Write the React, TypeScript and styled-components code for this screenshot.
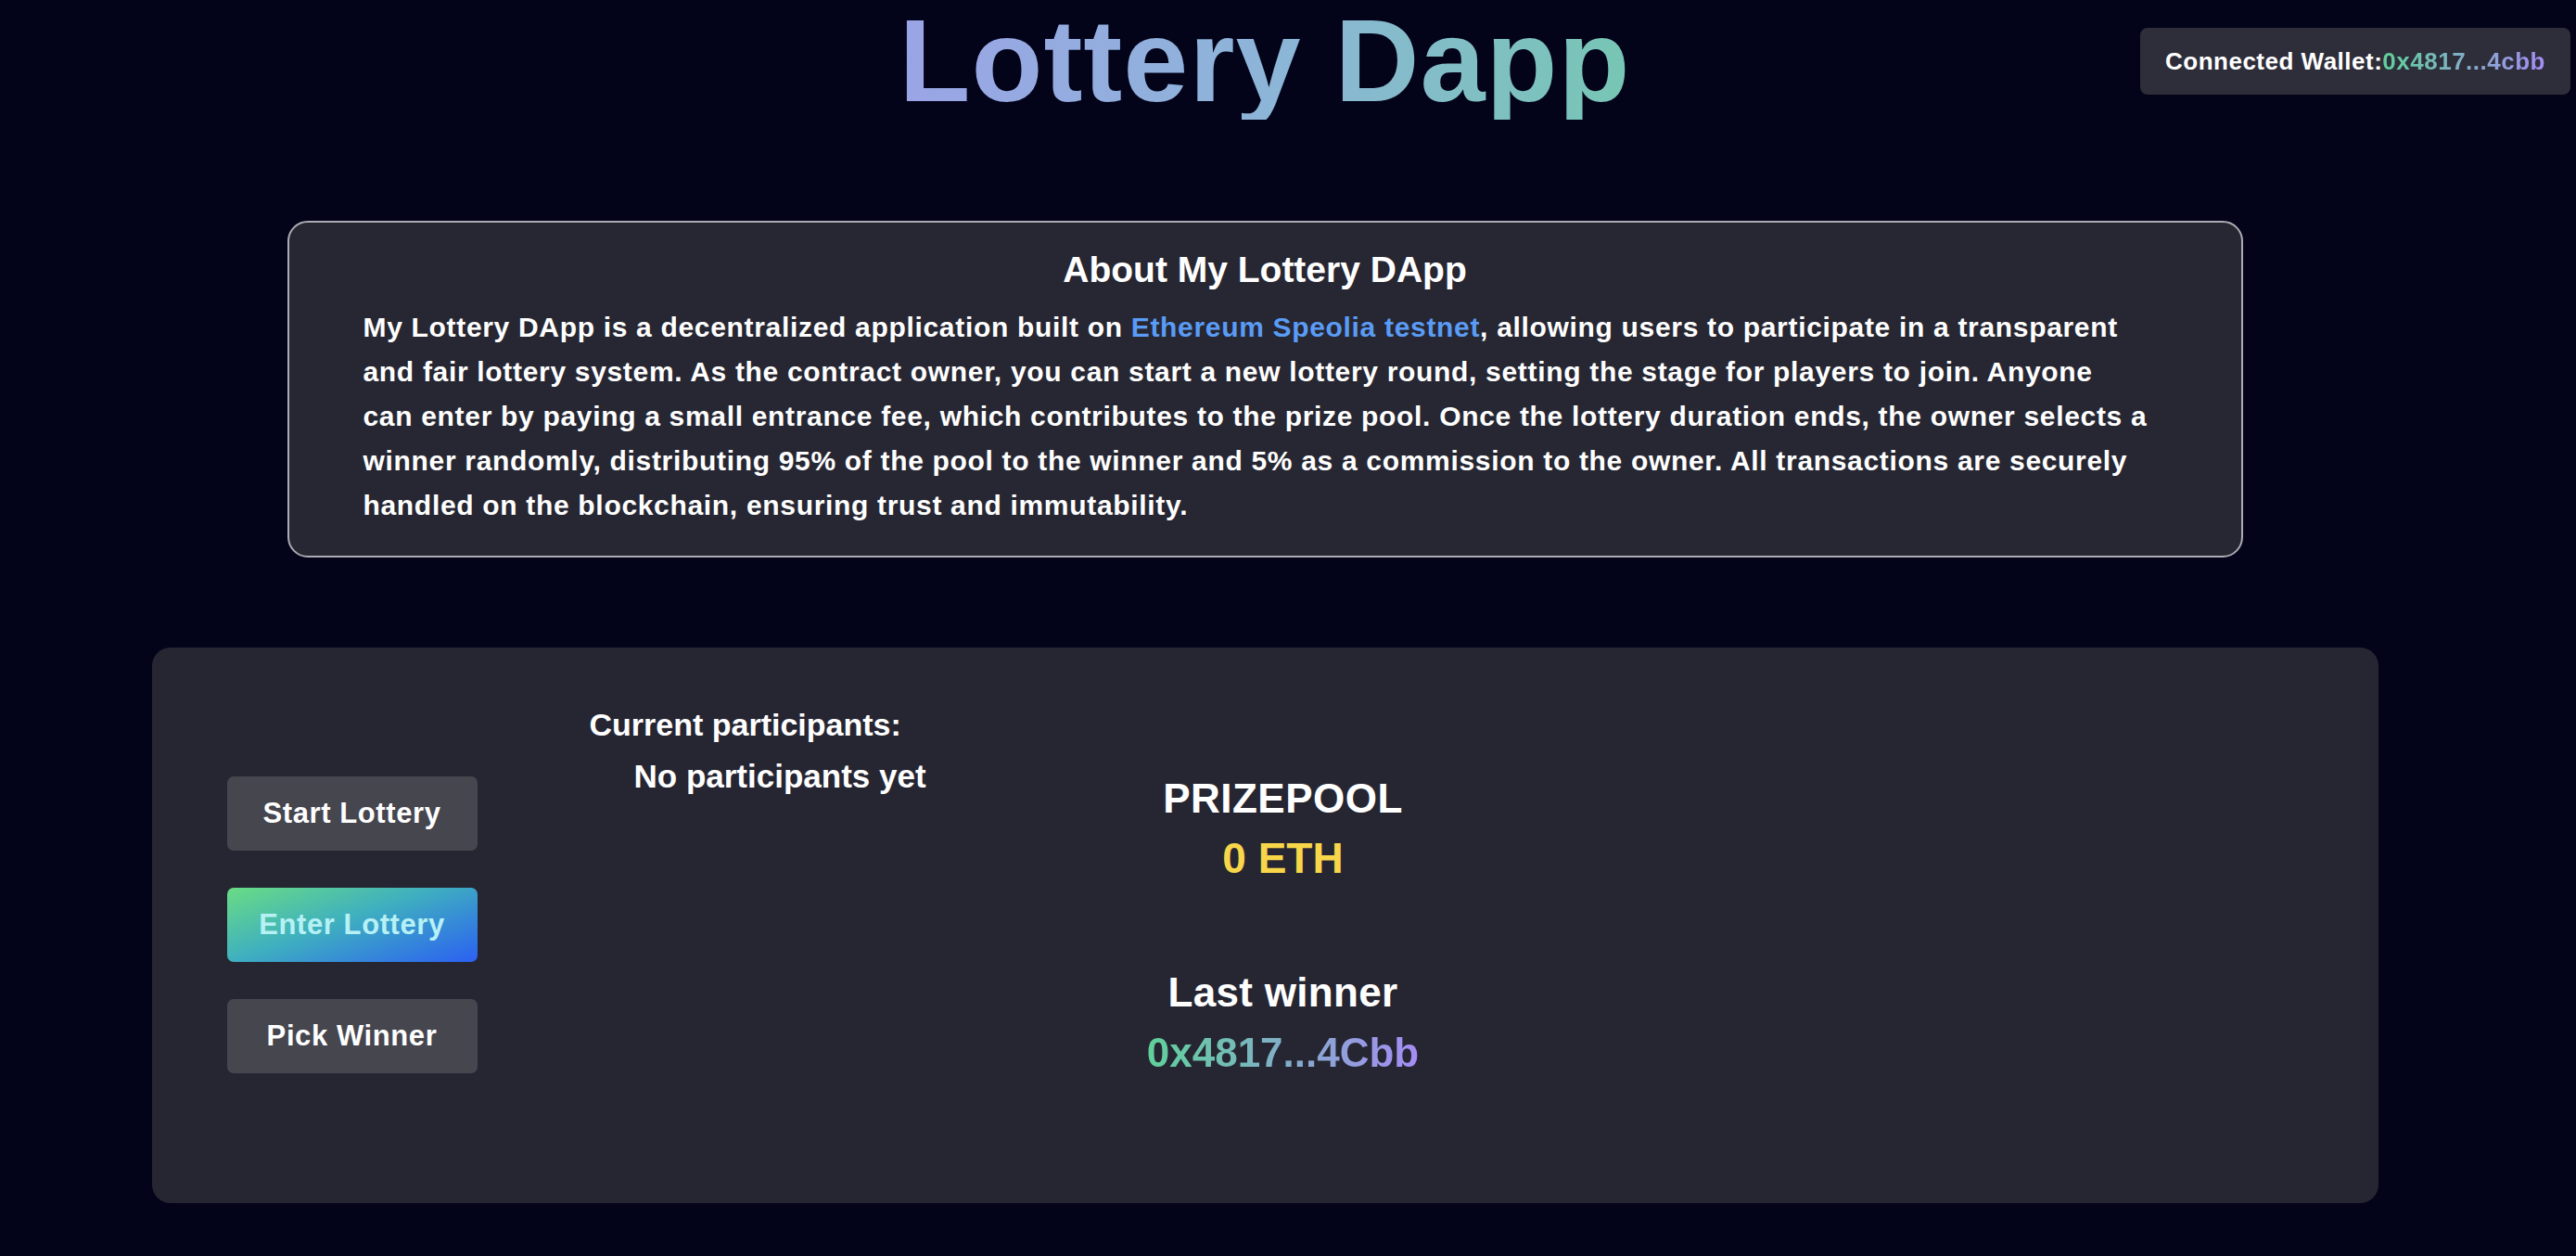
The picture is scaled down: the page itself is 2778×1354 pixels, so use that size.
import React from "react";
import styled, { createGlobalStyle } from "styled-components";

const GlobalStyle = createGlobalStyle`
  html, body {
    margin: 0;
    padding: 0;
    background: #03031a;
    color: #ffffff;
    font-family: "Liberation Sans", Arial, sans-serif;
  }
  * { box-sizing: border-box; }
`;

const Page = styled.div`
  width: 2728px;
  min-height: 1354px;
  display: flex;
  flex-direction: column;
  align-items: center;
  padding-top: 3px;
`;

const Title = styled.h1`
  margin: 0;
  font-size: 126px;
  line-height: 1;
  font-weight: 700;
  letter-spacing: 1px;
  background: linear-gradient(90deg, #9aa4e6 0%, #8db5d8 50%, #77c6b4 100%);
  -webkit-background-clip: text;
  background-clip: text;
  color: transparent;
`;

const WalletBadge = styled.div`
  position: absolute;
  top: 30px;
  right: 6px;
  width: 464px;
  height: 72px;
  display: flex;
  align-items: center;
  justify-content: center;
  background: #2e2e3a;
  border-radius: 8px;
  font-size: 26px;
  font-weight: 700;
  letter-spacing: 0.5px;
  color: #ffffff;
`;

const GradientText = styled.span<{ $from: string; $to: string }>`
  background: linear-gradient(90deg, ${(p) => p.$from}, ${(p) => p.$to});
  -webkit-background-clip: text;
  background-clip: text;
  color: transparent;
`;

const AboutCard = styled.section`
  margin-top: 109px;
  width: 2109px;
  background: #272733;
  border: 2px solid #acacb4;
  border-radius: 22px;
  padding: 28px 80px 30px 80px;
`;

const AboutHeading = styled.h2`
  margin: 0 0 14px 0;
  text-align: center;
  font-size: 39px;
  line-height: 1.2;
  font-weight: 700;
`;

const AboutText = styled.p`
  margin: 0;
  font-size: 30px;
  line-height: 48px;
  font-weight: 700;
  letter-spacing: 0.68px;
  white-space: nowrap;
`;

const Link = styled.span`
  color: #5a9cf5;
`;

const Panel = styled.section`
  margin-top: 97px;
  width: 2401px;
  height: 599px;
  background: #262633;
  border-radius: 20px;
  padding: 55px 81px;
  display: flex;
  align-items: center;
`;

const ButtonColumn = styled.div`
  width: 270px;
  display: flex;
  flex-direction: column;
  gap: 40px;
`;

const ActionButton = styled.button<{ $primary?: boolean }>`
  width: 270px;
  height: 80px;
  border: none;
  border-radius: 7px;
  font-family: "Liberation Sans", Arial, sans-serif;
  font-size: 31px;
  font-weight: 700;
  letter-spacing: 0.6px;
  cursor: pointer;
  color: ${(p) => (p.$primary ? "#b6f1f5" : "#ffffff")};
  background: ${(p) =>
    p.$primary
      ? "linear-gradient(160deg, #69dc84 0%, #3fb0bf 45%, #2b60f2 100%)"
      : "#46464f"};
`;

const Participants = styled.div`
  align-self: flex-start;
  margin-left: 121px;
  width: 420px;
  font-size: 34px;
  font-weight: 700;
  line-height: 56px;
`;

const ParticipantsTitle = styled.div``;

const ParticipantsList = styled.div`
  padding-left: 48px;
  font-size: 35px;
`;

const PrizeColumn = styled.div`
  width: 656px;
  display: flex;
  flex-direction: column;
  align-items: center;
  gap: 79px;
`;

const StatBlock = styled.div`
  display: flex;
  flex-direction: column;
  align-items: center;
  line-height: 65px;
  font-weight: 700;
`;

const StatLabel = styled.div<{ $upper?: boolean }>`
  font-size: 44px;
  letter-spacing: ${(p) => (p.$upper ? "0.5px" : "0.3px")};
`;

const StatValue = styled.div`
  font-size: 46px;
  color: #f7d64a;
`;

const WinnerValue = styled.div`
  font-size: 44px;
`;

export default function App() {
  return (
    <>
      <GlobalStyle />
      <Page>
        <Title>Lottery Dapp</Title>
        <WalletBadge>
          Connected Wallet:
          <GradientText $from="#5fd19a" $to="#a58cf5">0x4817...4cbb</GradientText>
        </WalletBadge>
        <AboutCard>
          <AboutHeading>About My Lottery DApp</AboutHeading>
          <AboutText>
            My Lottery DApp is a decentralized application built on{" "}
            <Link>Ethereum Speolia testnet</Link>, allowing users to participate in a
            transparent
            <br />
            and fair lottery system. As the contract owner, you can start a new lottery round,
            setting the stage for players to join. Anyone
            <br />
            can enter by paying a small entrance fee, which contributes to the prize pool. Once
            the lottery duration ends, the owner selects a
            <br />
            winner randomly, distributing 95% of the pool to the winner and 5% as a commission to
            the owner. All transactions are securely
            <br />
            handled on the blockchain, ensuring trust and immutability.
          </AboutText>
        </AboutCard>
        <Panel>
          <ButtonColumn>
            <ActionButton>Start Lottery</ActionButton>
            <ActionButton $primary>Enter Lottery</ActionButton>
            <ActionButton>Pick Winner</ActionButton>
          </ButtonColumn>
          <Participants>
            <ParticipantsTitle>Current participants:</ParticipantsTitle>
            <ParticipantsList>No participants yet</ParticipantsList>
          </Participants>
          <PrizeColumn>
            <StatBlock>
              <StatLabel $upper>PRIZEPOOL</StatLabel>
              <StatValue>0 ETH</StatValue>
            </StatBlock>
            <StatBlock>
              <StatLabel>Last winner</StatLabel>
              <WinnerValue>
                <GradientText $from="#5fd19a" $to="#a58cf5">0x4817...4Cbb</GradientText>
              </WinnerValue>
            </StatBlock>
          </PrizeColumn>
        </Panel>
      </Page>
    </>
  );
}
